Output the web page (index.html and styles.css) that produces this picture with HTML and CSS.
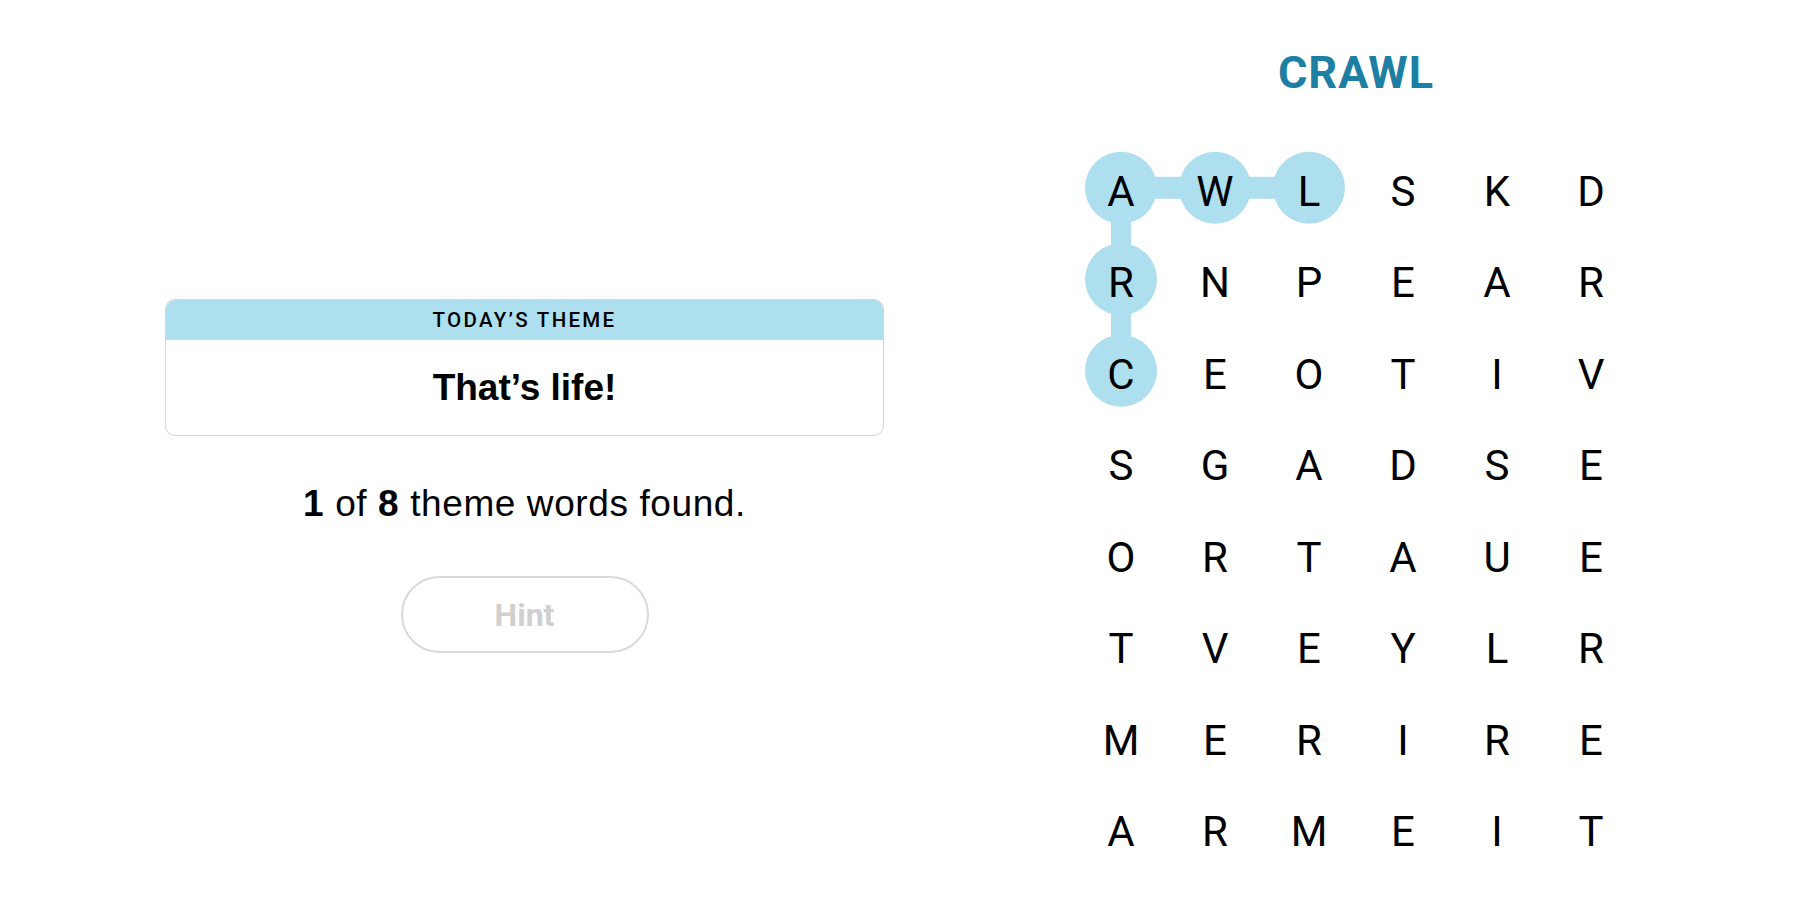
FILE: index.html
```html
<!DOCTYPE html>
<html lang="en">
<head>
  <meta charset="UTF-8" />
  <meta name="viewport" content="width=device-width, initial-scale=1" />
  <title>Strands</title>
  <link rel="stylesheet" href="styles.css">
</head>
<body>

  <main class="game">
    <section class="info">
      <div class="theme-card">
        <div class="theme-label">TODAY’S THEME</div>
        <div class="theme-name">That’s life!</div>
      </div>
      <p class="progress"><b>1</b> of <b>8</b> theme words found.</p>
      <button class="hint" disabled>Hint</button>
    </section>

    <section class="board">
      <h2 class="current-word">CRAWL</h2>
      <div class="grid">
        <!-- path of the word being traced -->
        <svg class="trail" width="564" height="732" viewBox="0 0 564 732">
          <line x1="47" y1="45.75" x2="235" y2="45.75" stroke="#aedfee" stroke-width="22" />
          <line x1="47" y1="45.75" x2="47" y2="228.75" stroke="#aedfee" stroke-width="20" />
          <circle cx="47" cy="45.75" r="36" fill="#aedfee" />
          <circle cx="141" cy="45.75" r="36" fill="#aedfee" />
          <circle cx="235" cy="45.75" r="36" fill="#aedfee" />
          <circle cx="47" cy="137.25" r="36" fill="#aedfee" />
          <circle cx="47" cy="228.75" r="36" fill="#aedfee" />
        </svg>

        <span class="cell">A</span><span class="cell">W</span><span class="cell">L</span><span class="cell">S</span><span class="cell">K</span><span class="cell">D</span>
        <span class="cell">R</span><span class="cell">N</span><span class="cell">P</span><span class="cell">E</span><span class="cell">A</span><span class="cell">R</span>
        <span class="cell">C</span><span class="cell">E</span><span class="cell">O</span><span class="cell">T</span><span class="cell">I</span><span class="cell">V</span>
        <span class="cell">S</span><span class="cell">G</span><span class="cell">A</span><span class="cell">D</span><span class="cell">S</span><span class="cell">E</span>
        <span class="cell">O</span><span class="cell">R</span><span class="cell">T</span><span class="cell">A</span><span class="cell">U</span><span class="cell">E</span>
        <span class="cell">T</span><span class="cell">V</span><span class="cell">E</span><span class="cell">Y</span><span class="cell">L</span><span class="cell">R</span>
        <span class="cell">M</span><span class="cell">E</span><span class="cell">R</span><span class="cell">I</span><span class="cell">R</span><span class="cell">E</span>
        <span class="cell">A</span><span class="cell">R</span><span class="cell">M</span><span class="cell">E</span><span class="cell">I</span><span class="cell">T</span>
      </div>
    </section>
  </main>

</body>
</html>
```

FILE: styles.css
```css
body {
  margin: 0;
  font-family: "Liberation Sans", Arial, sans-serif;
  color: #000;
  background: #fff;
}

.game {
  display: flex;
  justify-content: center;
  gap: 190px;
  height: 900px;
  padding-left: 3px;
  overflow: hidden;
}

/* left column */
.info {
  width: 719px;
  display: flex;
  flex-direction: column;
  align-items: center;
  padding-top: 299px;
}

.theme-card {
  width: 100%;
  box-sizing: border-box;
  border: 1px solid #d4d4d4;
  border-radius: 10px;
  overflow: hidden;
}

.theme-label {
  height: 40px;
  line-height: 40px;
  background: #aedfee;
  text-align: center;
  font-family: Roboto, "Liberation Sans", sans-serif;
  font-size: 20.5px;
  font-weight: 500;
  letter-spacing: 2.3px;
}

.theme-name {
  height: 95px;
  display: flex;
  align-items: center;
  justify-content: center;
  font-size: 37px;
  font-weight: bold;
}

.progress {
  margin: 46px 0 0;
  font-size: 37px;
  line-height: 43px;
  letter-spacing: 0.6px;
}

.hint {
  margin-top: 51px;
  width: 248px;
  height: 77px;
  border: 2px solid #d9d9d9;
  border-radius: 40px;
  background: #fff;
  color: #d0d0d0;
  font-family: Roboto, "Liberation Sans", sans-serif;
  font-size: 32px;
  font-weight: bold;
}

/* right column */
.board {
  width: 564px;
  display: flex;
  flex-direction: column;
  align-items: center;
}

.current-word {
  margin: 50px 0 47px;
  font-family: Roboto, "Liberation Sans", sans-serif;
  font-size: 45px;
  line-height: 45px;
  font-weight: bold;
  color: #1d7fa3;
  letter-spacing: 1px;
}

.grid {
  position: relative;
  display: grid;
  grid-template-columns: repeat(6, 94px);
  grid-template-rows: repeat(8, 91.5px);
}

.trail {
  position: absolute;
  top: 0;
  left: 0;
}

.cell {
  position: relative;
  z-index: 1;
  display: flex;
  align-items: center;
  justify-content: center;
  padding-top: 7px;
  font-family: Roboto, "Liberation Sans", sans-serif;
  font-size: 42px;
}
```
